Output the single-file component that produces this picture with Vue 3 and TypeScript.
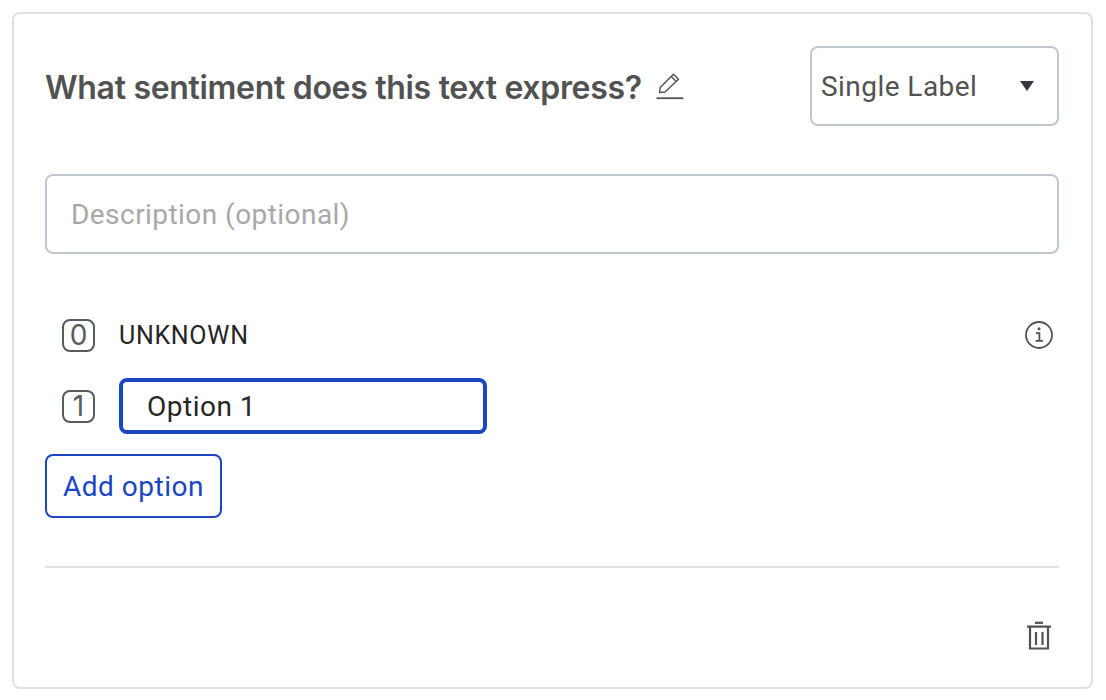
<script setup lang="ts">
const title: string = 'What sentiment does this text express?'
</script>

<template>
  <div class="page">
    <section class="card">
      <header class="head">
        <div class="title-wrap">
          <h2 class="title">{{ title }}</h2>
          <svg class="pencil" width="30" height="30" viewBox="0 0 30 30" fill="none" stroke="#555" stroke-width="1.5">
            <path d="M4.5 21.5 L5.2 16.5 L18.5 3.2 L23.5 8.2 L10 21 Z" stroke-linejoin="round" />
            <path d="M16.2 5.5 L21.2 10.5" />
            <path d="M1.5 27.2 H28.5" stroke-width="1.8" />
          </svg>
        </div>
        <div class="select">
          <span>Single Label</span>
          <i class="caret"></i>
        </div>
      </header>

      <div class="description">Description (optional)</div>

      <div class="option first">
        <span class="key zero">0</span>
        <span class="unknown">UNKNOWN</span>
        <svg class="info" width="30" height="30" viewBox="0 0 30 30" fill="none" stroke="#4d5358" stroke-width="1.8">
          <circle cx="15" cy="15" r="13" />
          <circle cx="15" cy="8.8" r="1.5" fill="#4d5358" stroke="none" />
          <path d="M12 13.2 H15.4 V20.8 M11.5 20.8 H19" />
        </svg>
      </div>

      <div class="option second">
        <span class="key">1</span>
        <div class="option-input">Option 1</div>
      </div>

      <button class="add" type="button">Add option</button>

      <hr class="rule" />

      <footer class="foot">
        <svg width="26" height="30" viewBox="0 0 26 30" fill="none" stroke="#4d5358" stroke-width="2.2">
          <path d="M9 1.8 H17" />
          <path d="M1 5.6 H25" />
          <path d="M4 5.6 V27.5 H22 V5.6" />
          <path d="M10 11 V24 M16.5 11 V24" />
        </svg>
      </footer>
    </section>
  </div>
</template>

<style scoped>
.page {
  padding: 12px 13px 11px 12px;
  font-family: Inter, Roboto, "Liberation Sans", sans-serif;
  background: #fff;
}
.card {
  box-sizing: border-box;
  height: 677px;
  border: 2px solid #e0e0e0;
  border-radius: 8px;
  padding: 32px 32px 0 31px;
  display: flex;
  flex-direction: column;
}
.head {
  display: flex;
  align-items: center;
  justify-content: space-between;
  height: 80px;
}
.title-wrap {
  display: flex;
  align-items: center;
  gap: 13px;
}
.title {
  margin: 2px 0 0;
  font-size: 32px;
  font-weight: 600;
  color: #525252;
  letter-spacing: -0.31px;
}
.pencil {
  margin-top: 0;
}
.select {
  box-sizing: border-box;
  width: 249px;
  height: 80px;
  border: 2px solid #c1c7cd;
  border-radius: 8px;
  padding: 0 23px 0 9px;
  display: flex;
  align-items: center;
  justify-content: space-between;
  font-family: Roboto, sans-serif;
  font-size: 28px;
  letter-spacing: 0.45px;
  color: #525252;
}
.caret {
  width: 0;
  height: 0;
  border-left: 7.5px solid transparent;
  border-right: 7.5px solid transparent;
  border-top: 10px solid #343a3f;
}
.description {
  box-sizing: border-box;
  margin-top: 48px;
  height: 80px;
  border: 2px solid #c1c7cd;
  border-radius: 8px;
  padding: 0 24px;
  display: flex;
  align-items: center;
  font-family: Roboto, sans-serif;
  font-size: 28px;
  letter-spacing: 0.45px;
  color: #a8a8a8;
}
.option {
  display: flex;
  align-items: center;
}
.first {
  margin-top: 57px;
  height: 48px;
  padding-left: 17px;
}
.second {
  margin-top: 19px;
  height: 56px;
  padding-left: 17px;
}
.key {
  box-sizing: border-box;
  width: 33px;
  height: 33px;
  border: 2px solid #555b60;
  border-radius: 8px;
  display: flex;
  align-items: center;
  justify-content: center;
  font-family: Inter, sans-serif;
  font-size: 28px;
  line-height: 1;
  color: #555b60;
  flex: none;
}
.unknown {
  margin-left: 24px;
  font-family: Roboto, sans-serif;
  font-size: 25px;
  letter-spacing: 0.7px;
  color: #262626;
}
.info {
  margin-left: auto;
  margin-right: 5px;
}
.option-input {
  box-sizing: border-box;
  margin-left: 24px;
  width: 368px;
  height: 56px;
  border: 4px solid #1a46c4;
  border-radius: 8px;
  padding-left: 24px;
  display: flex;
  align-items: center;
  font-family: Roboto, sans-serif;
  font-size: 28px;
  letter-spacing: 0.5px;
  color: #262626;
}
.add {
  box-sizing: border-box;
  margin-top: 20px;
  width: 177px;
  height: 64px;
  border: 2px solid #1a46c4;
  border-radius: 8px;
  background: #fff;
  padding: 0;
  font-family: Roboto, sans-serif;
  font-size: 28px;
  letter-spacing: 0.5px;
  color: #1a46c4;
}
.rule {
  margin: 48px 0 0;
  border: 0;
  height: 2px;
  background: #e0e0e0;
}
.foot {
  display: flex;
  justify-content: flex-end;
  padding: 53px 7px 0 0;
}
</style>

<style>
html, body {
  margin: 0;
  background: #fff;
}
</style>
